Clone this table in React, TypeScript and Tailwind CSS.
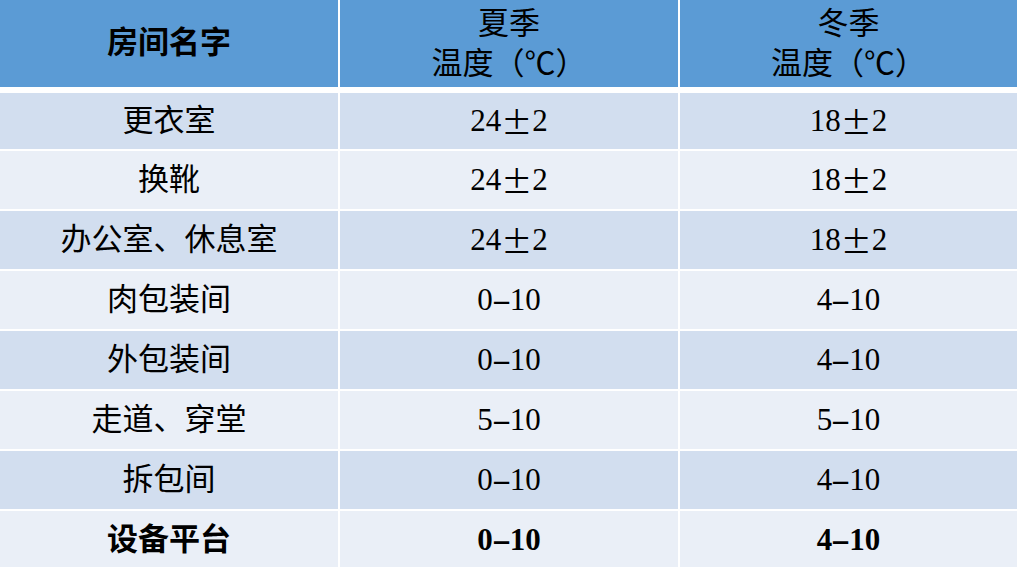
const rows = [
  { name: "更衣室", summer: "24±2", winter: "18±2" },
  { name: "换靴", summer: "24±2", winter: "18±2" },
  { name: "办公室、休息室", summer: "24±2", winter: "18±2" },
  { name: "肉包装间", summer: "0-10", winter: "4-10" },
  { name: "外包装间", summer: "0-10", winter: "4-10" },
  { name: "走道、穿堂", summer: "5-10", winter: "5-10" },
  { name: "拆包间", summer: "0-10", winter: "4-10" },
  { name: "设备平台", summer: "0-10", winter: "4-10", bold: true },
];

// full-width ± and wide dash, like the original's font
function Value({ text }: { text: string }) {
  if (text.includes("±")) {
    const [a, b] = text.split("±");
    return (
      <>
        {a}
        <span className="font-['Noto_Sans_CJK_SC'] font-normal">±</span>
        {b}
      </>
    );
  }
  const [a, b] = text.split("-");
  return (
    <>
      {a}
      <span className="inline-block w-[17px] text-center scale-x-[1.9]">-</span>
      {b}
    </>
  );
}

export default function App() {
  return (
    <div className="w-[1017px] h-[567px] bg-white overflow-hidden text-black text-[31px] font-['Liberation_Serif','Noto_Sans_CJK_SC',serif]">
      {/* Header */}
      <div className="grid grid-cols-[338px_338px_337px] gap-x-[2px] h-[87px]">
        <div className="bg-[#5b9bd5] flex items-center justify-center font-bold">
          房间名字
        </div>
        <div className="bg-[#5b9bd5] flex flex-col items-center justify-center leading-[40px]">
          <span>夏季</span>
          <span>温度（℃）</span>
        </div>
        <div className="bg-[#5b9bd5] flex flex-col items-center justify-center leading-[40px]">
          <span>冬季</span>
          <span>温度（℃）</span>
        </div>
      </div>

      {/* Body */}
      <div className="flex flex-col gap-y-[2px] mt-[6px]">
        {rows.map((r, i) => (
          <div
            key={r.name}
            className={`grid grid-cols-[338px_338px_337px] gap-x-[2px] ${
              i === 0 ? "h-[56px]" : "h-[58px]"
            } ${r.bold ? "font-bold" : ""}`}
          >
            {[r.name, r.summer, r.winter].map((c, j) => (
              <div
                key={j}
                className={`flex items-center justify-center ${
                  i % 2 === 0 ? "bg-[#d2deef]" : "bg-[#eaeff7]"
                }`}
              >
                {j === 0 ? c : <Value text={c} />}
              </div>
            ))}
          </div>
        ))}
      </div>
    </div>
  );
}
